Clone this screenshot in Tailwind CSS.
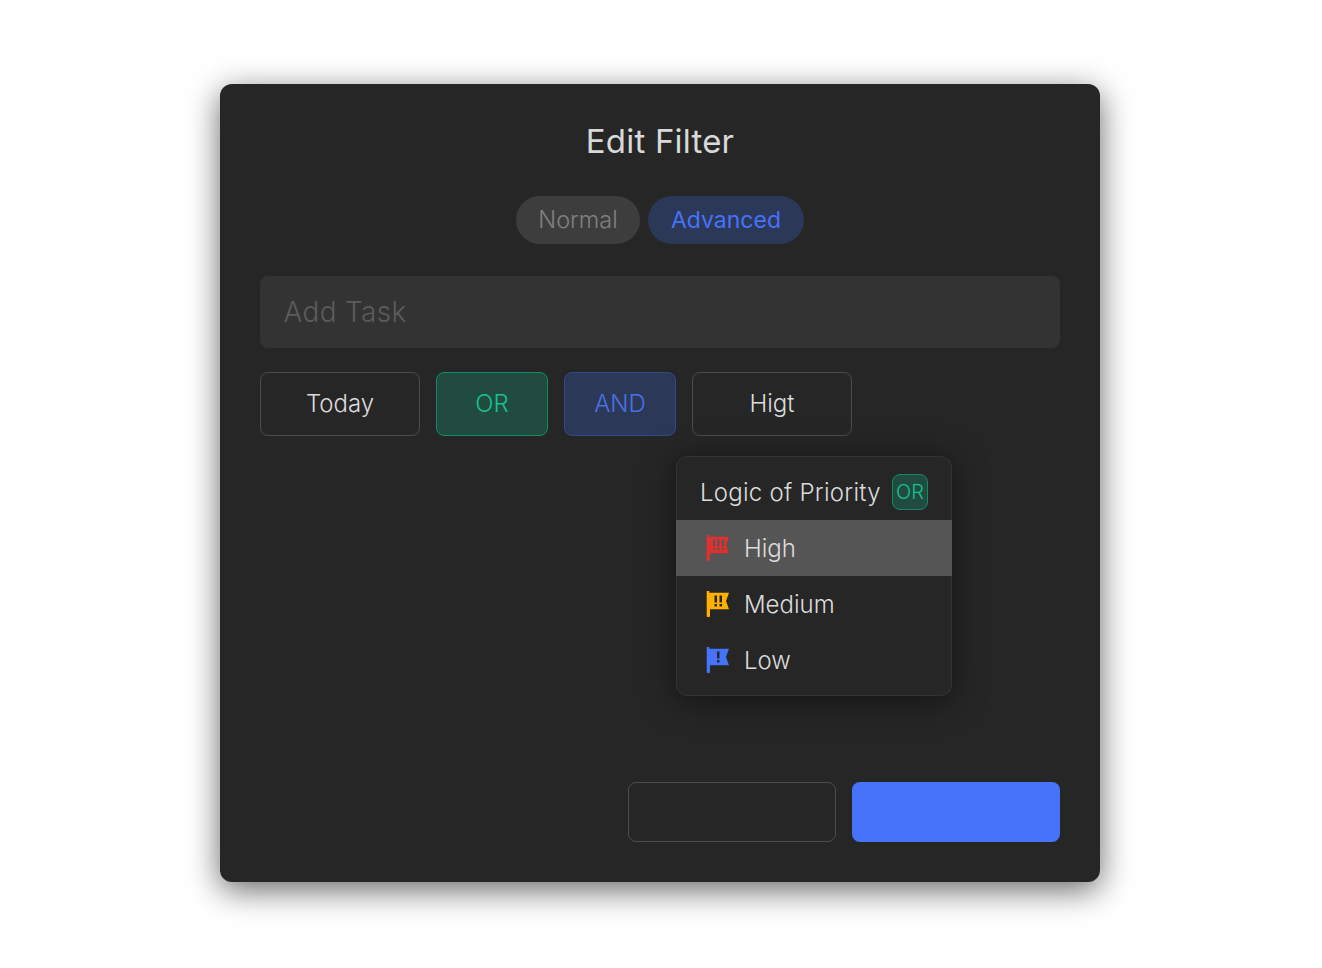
<!DOCTYPE html>
<html lang="en">
<head>
    <meta charset="UTF-8">
    <meta name="viewport" content="width=device-width, initial-scale=1.0">
    <title>Edit Filter</title>
    <script src="https://cdn.jsdelivr.net/npm/@tailwindcss/browser@4"></script>
</head>
<body class="bg-white font-['Inter',sans-serif] font-light">
    <div class="w-[1322px] h-[968px] pt-[84px] pl-[220px] overflow-hidden">
        <div class="relative flex flex-col w-[880px] h-[798px] px-10 pt-10 pb-10 bg-[#262626] rounded-xl shadow-[0_8px_32px_rgba(0,0,0,0.6)]">
            <h1 class="text-[33px] leading-[34px] font-normal tracking-[0.2px] text-center text-[#d9d9d9]">Edit Filter</h1>

            <!-- mode tabs -->
            <div class="flex justify-center gap-2 mt-[38px]">
                <div class="flex items-center justify-center w-[124px] h-12 rounded-full bg-[#3d3d3d] text-[23.5px] text-[#808080]">Normal</div>
                <div class="flex items-center justify-center w-[156px] h-12 rounded-full bg-[#2c3857] text-[23px] font-normal text-[#4772fa]">Advanced</div>
            </div>

            <div class="flex items-center h-[72px] mt-8 pl-[23.5px] pr-6 rounded-lg bg-[#333333] text-[28px] tracking-[0.3px] text-[#5c5c5c]">Add Task</div>

            <!-- query chips -->
            <div class="flex gap-4 mt-6">
                <div class="flex items-center justify-center w-40 h-16 rounded-lg border border-[#4d4d4d] text-[24px] text-[#dcdcdc]">Today</div>
                <div class="flex items-center justify-center w-28 h-16 rounded-lg border border-[#158a68] bg-[#224b40] text-[24px] text-[#17c08f]">OR</div>
                <div class="flex items-center justify-center w-28 h-16 rounded-lg border border-[#33498c] bg-[#2c3857] text-[24px] text-[#4a70e6]">AND</div>
                <div class="flex items-center justify-center w-40 h-16 rounded-lg border border-[#4d4d4d] text-[24px] text-[#dcdcdc]">Higt</div>
            </div>

            <div class="flex justify-end gap-4 mt-auto">
                <div class="w-52 h-[60px] rounded-lg border border-[#4d4d4d]"></div>
                <div class="w-52 h-[60px] rounded-lg bg-[#4772fa]"></div>
            </div>

            <!-- priority dropdown -->
            <div class="absolute left-[456px] top-[372px] w-[276px] h-[240px] rounded-xl bg-[#262626] shadow-[inset_0_0_0_1px_#333333,0_4px_32px_rgba(0,0,0,0.5)]">
                <div class="flex items-center justify-between h-16 pt-2 px-6">
                    <span class="pt-[2px] text-[24px] tracking-[0.25px] text-[#dcdcdc]">Logic of Priority</span>
                    <span class="flex items-center justify-center w-9 h-9 rounded-lg border border-[#158a68] bg-[#224b40] text-[20px] text-[#17c08f]">OR</span>
                </div>
                <div class="flex items-center h-14 pl-[30px] gap-[14px] bg-[#555555] text-[24px] text-[#dcdcdc]">
                    <svg class="w-6 h-7" viewBox="0 0 24 28"><path fill="#e03131" fill-rule="evenodd" d="M0.7 1H3.4V2.7H23H23L20 11L23 19.3H4V26.2Q4 27 3 27H1.7Q0.7 27 0.7 26.2ZM7 5.5V12.5H9V5.5ZM11.5 5.5V12.5H13.5V5.5ZM16 5.5V12.5H18V5.5ZM7 14V16H9V14ZM11.5 14V16H13.5V14ZM16 14V16H18V14Z"/></svg>
                    <span class="pt-[2px]">High</span>
                </div>
                <div class="flex items-center h-14 pl-[30px] gap-[14px] text-[24px] text-[#dcdcdc]">
                    <svg class="w-6 h-7" viewBox="0 0 24 28"><path fill="#ffb000" fill-rule="evenodd" d="M0.7 1H3.4V2.7H23L20 11L23 19.3H4V26.2Q4 27 3 27H1.7Q0.7 27 0.7 26.2ZM8.5 5.5V12.5H11V5.5ZM13.5 5.5V12.5H16V5.5ZM8.5 14V16.5H11V14ZM13.5 14V16.5H16V14Z"/></svg>
                    <span class="pt-[2px]">Medium</span>
                </div>
                <div class="flex items-center h-14 pl-[30px] gap-[14px] text-[24px] text-[#dcdcdc]">
                    <svg class="w-6 h-7" viewBox="0 0 24 28"><path fill="#4772fa" fill-rule="evenodd" d="M0.7 1H3.4V2.7H23L20 11L23 19.3H4V26.2Q4 27 3 27H1.7Q0.7 27 0.7 26.2ZM11 5.5V12.5H13.5V5.5ZM11 14V16.5H13.5V14Z"/></svg>
                    <span class="pt-[2px]">Low</span>
                </div>
            </div>
        </div>
    </div>
</body>
</html>
